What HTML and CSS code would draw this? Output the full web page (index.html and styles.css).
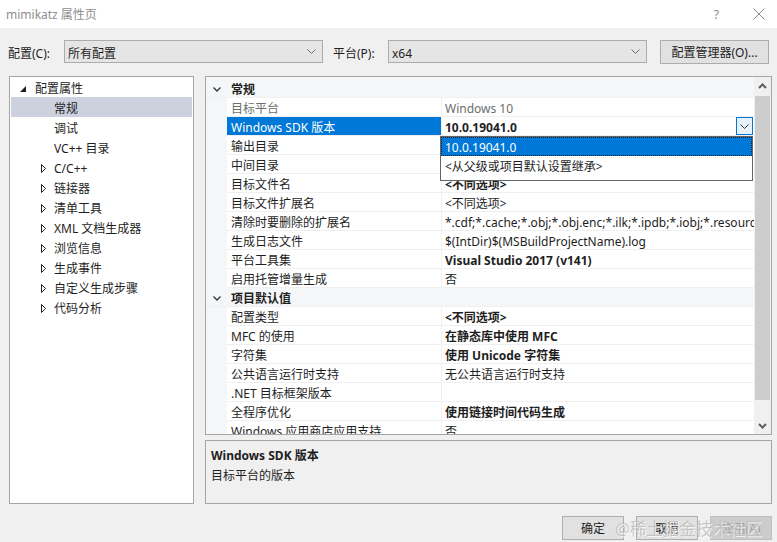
FILE: index.html
```html
<!DOCTYPE html>
<html lang="zh-CN">
<head>
<meta charset="utf-8">
<title>mimikatz 属性页</title>
<link rel="stylesheet" href="styles.css">
</head>
<body>
<div class="window">
  <header class="titlebar">
    <span class="title">mimikatz 属性页</span>
    <span class="help">?</span>
    <svg class="close" width="12" height="12" viewBox="0 0 12 12"><path d="M0.5 0.5L11.5 11.5M11.5 0.5L0.5 11.5" stroke="#8a8a8a" stroke-width="1" fill="none"/></svg>
  </header>

  <div class="toolbar">
    <span class="lbl lbl-config">配置(C):</span>
    <div class="combo"><span class="ct">所有配置</span><svg class="chev" width="9" height="5" viewBox="0 0 9 5"><path d="M0.5 0.5L4.5 4.5L8.5 0.5" stroke="#707070" fill="none"/></svg></div>
    <span class="lbl lbl-platform">平台(P):</span>
    <div class="combo"><span class="ct">x64</span><svg class="chev" width="9" height="5" viewBox="0 0 9 5"><path d="M0.5 0.5L4.5 4.5L8.5 0.5" stroke="#707070" fill="none"/></svg></div>
    <button class="btn btn-mgr">配置管理器(O)...</button>
  </div>

  <div class="main">
    <nav class="tree">
      <div class="t-row lvl0"><span class="t-ico"><svg width="6" height="6" viewBox="0 0 6 6"><path d="M6 0L6 6L0 6Z" fill="#1e1e1e"/></svg></span>配置属性</div>
      <div class="t-row lvl1 selected"><span class="t-ico"></span>常规</div>
      <div class="t-row lvl1"><span class="t-ico"></span>调试</div>
      <div class="t-row lvl1"><span class="t-ico"></span>VC++ 目录</div>
      <div class="t-row lvl1"><span class="t-ico"><svg width="6" height="9" viewBox="0 0 6 9"><path d="M0.5 0.5L4.5 4.5L0.5 8.5Z" fill="none" stroke="#1e1e1e"/></svg></span>C/C++</div>
      <div class="t-row lvl1"><span class="t-ico"><svg width="6" height="9" viewBox="0 0 6 9"><path d="M0.5 0.5L4.5 4.5L0.5 8.5Z" fill="none" stroke="#1e1e1e"/></svg></span>链接器</div>
      <div class="t-row lvl1"><span class="t-ico"><svg width="6" height="9" viewBox="0 0 6 9"><path d="M0.5 0.5L4.5 4.5L0.5 8.5Z" fill="none" stroke="#1e1e1e"/></svg></span>清单工具</div>
      <div class="t-row lvl1"><span class="t-ico"><svg width="6" height="9" viewBox="0 0 6 9"><path d="M0.5 0.5L4.5 4.5L0.5 8.5Z" fill="none" stroke="#1e1e1e"/></svg></span>XML 文档生成器</div>
      <div class="t-row lvl1"><span class="t-ico"><svg width="6" height="9" viewBox="0 0 6 9"><path d="M0.5 0.5L4.5 4.5L0.5 8.5Z" fill="none" stroke="#1e1e1e"/></svg></span>浏览信息</div>
      <div class="t-row lvl1"><span class="t-ico"><svg width="6" height="9" viewBox="0 0 6 9"><path d="M0.5 0.5L4.5 4.5L0.5 8.5Z" fill="none" stroke="#1e1e1e"/></svg></span>生成事件</div>
      <div class="t-row lvl1"><span class="t-ico"><svg width="6" height="9" viewBox="0 0 6 9"><path d="M0.5 0.5L4.5 4.5L0.5 8.5Z" fill="none" stroke="#1e1e1e"/></svg></span>自定义生成步骤</div>
      <div class="t-row lvl1"><span class="t-ico"><svg width="6" height="9" viewBox="0 0 6 9"><path d="M0.5 0.5L4.5 4.5L0.5 8.5Z" fill="none" stroke="#1e1e1e"/></svg></span>代码分析</div>
    </nav>

    <section class="right">
      <div class="grid">
        <div class="rows">
          <div class="cat"><span class="cat-ico"><svg width="8" height="5" viewBox="0 0 8 5"><path d="M0.5 0.5L4 4L7.5 0.5" fill="none" stroke="#333" stroke-width="1.3"/></svg></span><span class="cat-name">常规</span></div>
          <div class="row dim"><span class="name">目标平台</span><span class="val">Windows 10</span></div>
          <div class="row active"><span class="name">Windows SDK 版本</span><span class="val b"><span class="vt">10.0.19041.0</span><span class="dd-btn"><svg width="9" height="5" viewBox="0 0 9 5"><path d="M0.5 0.5L4.5 4.5L8.5 0.5" fill="none" stroke="#333"/></svg></span></span></div>
          <div class="row"><span class="name">输出目录</span><span class="val"></span></div>
          <div class="row"><span class="name">中间目录</span><span class="val"></span></div>
          <div class="row"><span class="name">目标文件名</span><span class="val b">&lt;不同选项&gt;</span></div>
          <div class="row"><span class="name">目标文件扩展名</span><span class="val">&lt;不同选项&gt;</span></div>
          <div class="row"><span class="name">清除时要删除的扩展名</span><span class="val">*.cdf;*.cache;*.obj;*.obj.enc;*.ilk;*.ipdb;*.iobj;*.resources;*.tlb;*.tli;*.tlh</span></div>
          <div class="row"><span class="name">生成日志文件</span><span class="val">$(IntDir)$(MSBuildProjectName).log</span></div>
          <div class="row"><span class="name">平台工具集</span><span class="val b">Visual Studio 2017 (v141)</span></div>
          <div class="row"><span class="name">启用托管增量生成</span><span class="val">否</span></div>
          <div class="cat"><span class="cat-ico"><svg width="8" height="5" viewBox="0 0 8 5"><path d="M0.5 0.5L4 4L7.5 0.5" fill="none" stroke="#333" stroke-width="1.3"/></svg></span><span class="cat-name">项目默认值</span></div>
          <div class="row"><span class="name">配置类型</span><span class="val b">&lt;不同选项&gt;</span></div>
          <div class="row"><span class="name">MFC 的使用</span><span class="val b">在静态库中使用 MFC</span></div>
          <div class="row"><span class="name">字符集</span><span class="val b">使用 Unicode 字符集</span></div>
          <div class="row"><span class="name">公共语言运行时支持</span><span class="val">无公共语言运行时支持</span></div>
          <div class="row"><span class="name">.NET 目标框架版本</span><span class="val"></span></div>
          <div class="row"><span class="name">全程序优化</span><span class="val b">使用链接时间代码生成</span></div>
          <div class="row"><span class="name">Windows 应用商店应用支持</span><span class="val">否</span></div>
        </div>
        <div class="scrollbar">
          <div class="sb-btn"><svg width="9" height="6" viewBox="0 0 9 6"><path d="M1 5L4.5 1.5L8 5" fill="none" stroke="#606060" stroke-width="2"/></svg></div>
          <div class="sb-track"><div class="sb-thumb"></div></div>
          <div class="sb-btn"><svg width="9" height="6" viewBox="0 0 9 6"><path d="M1 1L4.5 4.5L8 1" fill="none" stroke="#606060" stroke-width="2"/></svg></div>
        </div>
        <div class="popup">
          <div class="opt sel">10.0.19041.0</div>
          <div class="opt">&lt;从父级或项目默认设置继承&gt;</div>
        </div>
      </div>

      <div class="desc">
        <div class="desc-title">Windows SDK 版本</div>
        <div class="desc-text">目标平台的版本</div>
      </div>

      <div class="buttons">
        <button class="btn btn-dlg">确定</button>
        <button class="btn btn-dlg">取消</button>
        <button class="btn btn-dlg disabled">应用(A)</button>
      </div>
    </section>
  </div>

  <div class="watermark">@稀土掘金技术社区</div>
</div>
</body>
</html>
```

FILE: styles.css
```css
* { box-sizing: border-box; }

html, body {
  margin: 0;
  padding: 0;
}

body {
  width: 777px;
  height: 542px;
  overflow: hidden;
  background: #f0f0f0;
  font-family: "Noto Sans", "Noto Sans CJK SC", sans-serif;
  font-size: 12px;
  color: #1e1e1e;
}

.window {
  position: relative;
  width: 777px;
  height: 542px;
}

/* title bar */
.titlebar {
  height: 28px;
  background: #ffffff;
  display: flex;
  align-items: center;
  padding-left: 6px;
  color: #8e8e8e;
}
.title { flex: 1; }
.help {
  font-size: 12px;
  margin-right: 34px;
  color: #8a8a8a;
}
.close { margin-right: 12px; }

/* toolbar */
.toolbar {
  display: flex;
  align-items: center;
  padding: 12px 0 0 8px;
  height: 35px;
}
.lbl {
  line-height: 19px;
  padding-top: 4px;
}
.lbl-config { width: 56px; }
.lbl-platform { width: 55px; margin-left: 10px; }

.combo {
  width: 259px;
  height: 23px;
  background: #e5e5e5;
  border: 1px solid #acacac;
  display: flex;
  align-items: center;
  justify-content: space-between;
  padding: 0 6px 0 3px;
}
.ct {
  line-height: 17px;
  padding-top: 4px;
}
.chev { display: block; }

.btn {
  font-family: "Noto Sans", "Noto Sans CJK SC", sans-serif;
  font-size: 12px;
  color: #1e1e1e;
  background: #e1e1e1;
  border: 1px solid #adadad;
  padding: 2px 0 0 0;
  margin: 0;
  line-height: 18px;
}
.btn-mgr {
  width: 109px;
  height: 24px;
  margin-left: 13px;
}

/* main area */
.main {
  display: flex;
  padding-left: 9px;
  margin-top: 13px;
  gap: 11px;
}

.tree {
  width: 185px;
  height: 428px;
  background: #ffffff;
  border: 1px solid #a5a5a5;
  padding: 0 1px;
}
.t-row {
  height: 20px;
  line-height: 17px;
  padding-top: 3px;
  display: flex;
  align-items: center;
  white-space: nowrap;
}
.t-ico {
  display: flex;
  align-items: center;
  flex: none;
}
.lvl0 { padding-left: 9px; }
.lvl0 .t-ico { width: 15px; }
.lvl1 { padding-left: 30px; }
.lvl1 .t-ico { width: 13px; }
.t-row.selected { background: #cdd0dd; }

/* right side */
.right {
  width: 567px;
  display: flex;
  flex-direction: column;
}

.grid {
  position: relative;
  height: 359px;
  border: 1px solid #a5a5a5;
  background: #ffffff;
  display: flex;
}
.rows {
  width: 548px;
  height: 357px;
  overflow: hidden;
  padding-top: 2px;
  background: #f5f6f8;
}

.cat {
  height: 19px;
  display: flex;
  align-items: center;
  padding-top: 3px;
  background: #f5f6f8;
  border-bottom: 1px solid #eef0f3;
}
.cat-ico {
  width: 21px;
  display: flex;
  justify-content: center;
  padding-left: 1px;
}
.cat-name {
  font-weight: bold;
  padding-left: 4px;
  line-height: 15px;
}

.row {
  height: 19px;
  display: flex;
  padding-left: 21px;
  white-space: nowrap;
}
.name {
  width: 214px;
  flex: none;
  background: #ffffff;
  border-bottom: 1px solid #f0f0f0;
  padding: 3px 0 0 4px;
  line-height: 15px;
  overflow: hidden;
}
.val {
  flex: 1;
  min-width: 0;
  background: #ffffff;
  border-left: 1px solid #f0f0f0;
  border-bottom: 1px solid #f0f0f0;
  padding: 3px 0 0 3px;
  line-height: 15px;
  overflow: hidden;
}
.val.b { font-weight: bold; }
.row.dim .name, .row.dim .val { color: #6d6d6d; }
.row.active .name {
  background: #0078d7;
  color: #ffffff;
}
.row.active .val {
  display: flex;
  justify-content: space-between;
  align-items: flex-start;
  padding-top: 0;
}
.vt {
  padding-top: 3px;
  line-height: 15px;
}
.dd-btn {
  width: 17px;
  height: 18px;
  margin-right: 1px;
  border: 1px solid #0078d7;
  background: #e5f1fb;
  display: flex;
  align-items: center;
  justify-content: center;
}

/* scrollbar */
.scrollbar {
  width: 17px;
  height: 357px;
  background: #f0f0f0;
  display: flex;
  flex-direction: column;
}
.sb-btn {
  height: 17px;
  display: flex;
  align-items: center;
  justify-content: center;
  flex: none;
}
.sb-track {
  flex: 1;
  padding: 2px 1px 0 1px;
}
.sb-thumb {
  height: 304px;
  background: #cdcdcd;
}

/* dropdown popup */
.popup {
  position: absolute;
  left: 234px;
  top: 59px;
  width: 313px;
  height: 45px;
  background: #ffffff;
  border: 1px solid #646464;
}
.opt {
  height: 19px;
  line-height: 16px;
  padding: 3px 0 0 4px;
  white-space: nowrap;
}
.opt.sel {
  background: #0078d7;
  color: #ffffff;
  outline: 1px dotted #202020;
  outline-offset: -1px;
}

/* description */
.desc {
  margin-top: 5px;
  height: 64px;
  border: 1px solid #a5a5a5;
  background: #f0f0f0;
  padding: 5px 5px 0 5px;
  line-height: 20px;
}
.desc-title { font-weight: bold; }

/* buttons */
.buttons {
  display: flex;
  justify-content: flex-end;
  gap: 12px;
  margin-top: 12px;
}
.btn-dlg {
  width: 62px;
  height: 24px;
}
.btn-dlg.disabled {
  background: #cccccc;
  border-color: #bfbfbf;
  color: #a0a0a0;
}

/* watermark overlay */
.watermark {
  position: absolute;
  left: 615px;
  top: 517px;
  font-size: 16.5px;
  line-height: 24px;
  color: rgba(190, 190, 190, 0.85);
  text-shadow: 1px 1px 0 rgba(255, 255, 255, 0.7);
  white-space: nowrap;
  pointer-events: none;
}
```
